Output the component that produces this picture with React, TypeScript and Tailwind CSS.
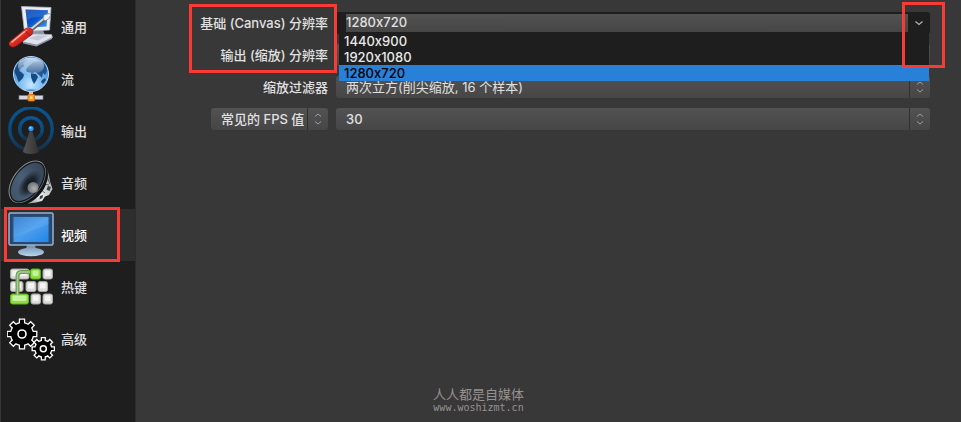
import React, { useState } from 'react';

const gearPath = (cx: number, cy: number, outer: number, inner: number) => {
  const at = (r: number, a: number) => `${(cx + r * Math.cos(a)).toFixed(2)} ${(cy + r * Math.sin(a)).toFixed(2)}`;
  let d = '';
  for (let i = 0; i < 8; i++) {
    const mid = (i * Math.PI) / 4;
    d += `${i === 0 ? 'M' : `A${inner} ${inner} 0 0 1 `}${at(inner, mid - 0.23)}`;
    d += `L${at(outer, mid - 0.17)}L${at(outer, mid + 0.17)}L${at(inner, mid + 0.23)}`;
  }
  return `${d}Z`;
};

const GeneralIcon = () => (
  <svg viewBox="0 0 48 48" className="size-12 shrink-0" aria-hidden="true">
    <defs>
      <linearGradient id="gen-screen" x1="0" y1="0" x2="1" y2="1">
        <stop offset="0" stopColor="#0d3f9c" />
        <stop offset="0.5" stopColor="#0a55c8" />
        <stop offset="1" stopColor="#3f9af0" />
      </linearGradient>
      <linearGradient id="gen-handle" x1="0" y1="0" x2="1" y2="1">
        <stop offset="0" stopColor="#ff9a86" />
        <stop offset="0.5" stopColor="#dc2a20" />
        <stop offset="1" stopColor="#8e0f0c" />
      </linearGradient>
    </defs>
    <path d="M24 28l12-1 2 5-13 2z" fill="#8f93a3" />
    <path d="M15 36l12-5 17.500.5 1 3-15.500 7.500-14-3z" fill="#dfe2ec" stroke="#aeb2c4" strokeWidth="0.6" />
    <path d="M16 39l13.500 3 15.500-7.500v1.500l-15.500 7.500-13.500-3z" fill="#9297ad" />
    <path d="M22 35.500l8-3h11l-10 5z" fill="#c3c8d8" />
    <path d="M14.500 3.500L44 4.500 42.500 27 17.500 28.500z" fill="#eceef4" stroke="#b2b6c8" strokeWidth="0.8" />
    <path d="M18.500 6.500L41 7.200 39.500 23.500 20.500 24.500z" fill="url(#gen-screen)" />
    <path d="M18.500 6.500L41 7.200 40.500 13C33 14 26 13 19.500 17z" fill="#5f9be8" opacity="0.3" />
    <path d="M24.500 26.500L38 15.500" stroke="#5b5e6a" strokeWidth="3.600" />
    <path d="M24 26L37.500 15" stroke="#d4d7de" strokeWidth="1.900" />
    <path d="M36 15.500l1-3.500 5-1.500 2 1.500-2.500 4-3.500 2z" fill="#eef0f4" stroke="#777a86" strokeWidth="0.7" />
    <path d="M3.500 38L18 26c2-1.800 5.500-1.500 7 .5s.8 4.500-1.500 6L9.500 43c-2.500 1.500-5 1.500-6.500 0s-1.500-3.500.5-5z" fill="url(#gen-handle)" stroke="#7d1511" strokeWidth="0.6" />
    <path d="M5 39L19 27.500" stroke="#ffb5a5" strokeWidth="1.500" strokeLinecap="round" />
    <path d="M17.500 27l6 6" stroke="#87110f" strokeWidth="0.8" />
  </svg>
);

const StreamIcon = () => (
  <svg viewBox="0 0 48 48" className="size-12 shrink-0" aria-hidden="true">
    <defs>
      <radialGradient id="globe" cx="0.5" cy="0.8" r="0.75">
        <stop offset="0" stopColor="#c4e8ff" />
        <stop offset="0.5" stopColor="#72b5ef" />
        <stop offset="1" stopColor="#2873c4" />
      </radialGradient>
      <linearGradient id="globe-shine" x1="0" y1="0" x2="0" y2="1">
        <stop offset="0" stopColor="#fff" stopOpacity="0.75" />
        <stop offset="1" stopColor="#fff" stopOpacity="0.1" />
      </linearGradient>
    </defs>
    <path d="M24 36v6" stroke="#c3c6d0" strokeWidth="4" />
    <rect x="12" y="40.500" width="24" height="4" fill="#d4d7dd" stroke="#777b86" strokeWidth="0.6" />
    <rect x="21" y="39.500" width="6.500" height="6.500" rx="0.8" fill="#ff9e19" stroke="#e06a08" strokeWidth="0.8" />
    <rect x="23" y="41.500" width="2.500" height="2.500" fill="#ffe58a" />
    <circle cx="24" cy="19" r="17.500" fill="url(#globe)" stroke="#b5dcfb" strokeWidth="1" />
    <g fill="#174a83">
      <path d="M9 12c2-4 6-7 10-8 2 0 2 1 0 2l-3 3c2 1 1 3-1 3l-3 4c2 1 4 2 5 4l-1 3-4 4c-1 0-2-5-3-7-2-2-2-5 0-8z" />
      <path d="M20 13c2-2 4-5 8-6l5-1c4 2 7 6 7 10l-2 4-2-2-1 5-4-4-3-2-2 1-6-1-1-2z" opacity="0.85" />
      <path d="M24 18l5 1 2 3-2 4-2 3-2-4-1-3zM35 25l3-2 1 2-3 4-2-2z" />
      <path d="M18 35c4-1 8-1 12 0-4 1.500-8 1.500-12 0z" opacity="0.5" />
    </g>
    <ellipse cx="24" cy="11" rx="13" ry="8.500" fill="url(#globe-shine)" />
  </svg>
);

const OutputIcon = () => (
  <svg viewBox="0 0 48 48" className="size-12 shrink-0" aria-hidden="true">
    <defs>
      <linearGradient id="wave" x1="0" y1="0" x2="0" y2="1">
        <stop offset="0" stopColor="#075593" />
        <stop offset="0.6" stopColor="#0b4877" />
        <stop offset="1" stopColor="#15304a" />
      </linearGradient>
      <linearGradient id="mast" x1="0" y1="0" x2="1" y2="0">
        <stop offset="0" stopColor="#555" />
        <stop offset="1" stopColor="#303030" />
      </linearGradient>
    </defs>
    <circle cx="24" cy="22" r="21.200" fill="none" stroke="url(#wave)" strokeWidth="3.400" />
    <circle cx="24" cy="22" r="11.300" fill="none" stroke="url(#wave)" strokeWidth="3.400" />
    <path d="M23 23h2l7 22c-3 2.500-13 2.500-16 0z" fill="url(#mast)" />
    <circle cx="24" cy="21.500" r="2.600" fill="#2495fb" />
    <circle cx="23.500" cy="20.800" r="1" fill="#9bd4ff" />
  </svg>
);

const AudioIcon = () => (
  <svg viewBox="0 0 48 48" className="size-12 shrink-0" aria-hidden="true">
    <defs>
      <linearGradient id="cone" x1="0" y1="0" x2="1" y2="0.3">
        <stop offset="0" stopColor="#3d5064" />
        <stop offset="0.5" stopColor="#4a6078" />
        <stop offset="1" stopColor="#39485a" />
      </linearGradient>
      <linearGradient id="chrome" x1="0" y1="1" x2="1" y2="0">
        <stop offset="0" stopColor="#8f9496" />
        <stop offset="0.35" stopColor="#eceeee" />
        <stop offset="0.7" stopColor="#b9bec0" />
        <stop offset="1" stopColor="#4b4f51" />
      </linearGradient>
      <radialGradient id="cone-core">
        <stop offset="0" stopColor="#0d1116" />
        <stop offset="0.5" stopColor="#151b22" stopOpacity="0.8" />
        <stop offset="1" stopColor="#1b232c" stopOpacity="0" />
      </radialGradient>
      <radialGradient id="hub" cx="0.6" cy="0.6" r="0.7">
        <stop offset="0" stopColor="#b0b0b0" />
        <stop offset="1" stopColor="#63676b" />
      </radialGradient>
    </defs>
    <path d="M38 8c3 3 4 8 5 14l2.500 8-3.500 6-4 1.500-3 4.500-6 1.500-8 1z" fill="url(#chrome)" />
    <path d="M41 27l3 1-1.500 4-3-1.500zM33 37l3-1-.5 3-3 1.500z" fill="#3a4042" />
    <path d="M39 15l4 10M33 30l5 4M37 25l5 1" stroke="#5c6264" strokeWidth="1" />
    <path d="M35 29l5-6M31 35l4-3" stroke="#fff" strokeWidth="1.200" />
    <g transform="rotate(-53 20.500 23)">
      <ellipse cx="20.500" cy="24.500" rx="24" ry="16" fill="#121415" />
      <ellipse cx="20.500" cy="22.800" rx="25" ry="15.300" fill="#151719" />
      <ellipse cx="20.500" cy="22.600" rx="24.300" ry="14.600" fill="#868c8c" />
      <ellipse cx="20.500" cy="22.900" rx="23.400" ry="13.800" fill="#15191c" />
      <ellipse cx="20.500" cy="22.800" rx="22" ry="12.500" fill="url(#cone)" />
      <ellipse cx="20" cy="26" rx="16" ry="9.200" fill="url(#cone-core)" />
    </g>
    <circle cx="26" cy="28.500" r="5.500" fill="url(#hub)" />
  </svg>
);

const VideoIcon = () => (
  <svg viewBox="0 0 48 48" className="size-12 shrink-0" aria-hidden="true">
    <defs>
      <linearGradient id="vid-screen" x1="0" y1="0" x2="1" y2="1">
        <stop offset="0" stopColor="#2f78c8" />
        <stop offset="0.5" stopColor="#4b9ded" />
        <stop offset="1" stopColor="#2385e5" />
      </linearGradient>
      <linearGradient id="vid-stand" x1="0" y1="0" x2="0" y2="1">
        <stop offset="0" stopColor="#7fa0bf" />
        <stop offset="1" stopColor="#b9d4ec" />
      </linearGradient>
    </defs>
    <path d="M20 34h8l1 4H19z" fill="#7895b1" />
    <ellipse cx="24" cy="41" rx="13" ry="4.300" fill="url(#vid-stand)" />
    <rect x="2" y="2" width="44" height="32" rx="1.500" fill="#2b4468" stroke="#94b4d5" strokeWidth="1.500" />
    <rect x="4.500" y="4.500" width="39" height="27" fill="#294f7c" />
    <rect x="6.500" y="6" width="35" height="25" fill="url(#vid-screen)" />
    <path d="M6.500 6h35v7L6.500 27z" fill="#8ec5f8" opacity="0.2" />
  </svg>
);

const hotkeys = [
  { x: 3.5, y: 6, w: 18.5, green: false },
  { x: 23.5, y: 6, w: 10, green: true },
  { x: 36, y: 6, w: 9.5, green: false },
  { x: 3.5, y: 18.5, w: 12.5, green: false },
  { x: 19, y: 18.5, w: 10, green: false },
  { x: 31, y: 18.5, w: 9.5, green: false },
  { x: 3.5, y: 31, w: 18, green: true },
  { x: 24, y: 31, w: 9.5, green: false },
  { x: 36, y: 31, w: 9.5, green: false },
];

const HotkeysIcon = () => (
  <svg viewBox="0 0 48 48" className="size-12 shrink-0" aria-hidden="true">
    {hotkeys.map(({ x, y, w, green }) => (
      <g key={`${x}-${y}`}>
        <rect x={x} y={y} width={w} height="10" rx="2" fill={green ? '#8fdc4a' : '#dcdcd8'} stroke={green ? '#55b50c' : '#a5a5a1'} />
        <rect x={x + 2} y={y + 1.5} width={w - 4} height="5.500" rx="1" fill={green ? '#c5f29a' : '#f4f4f2'} />
      </g>
    ))}
    <path d="M10.500 32V13q0-4 4-4H23" fill="none" stroke="#6e9c55" strokeWidth="4" />
    <path d="M10.500 32V13q0-4 4-4H23" fill="none" stroke="#a9cf92" strokeWidth="1.500" />
  </svg>
);

const AdvancedIcon = () => (
  <svg viewBox="0 0 48 48" className="size-12 shrink-0" aria-hidden="true">
    <g fill="#000" stroke="#fff" strokeWidth="1.300">
      <path d={gearPath(15, 19, 15, 11.5)} />
      <circle cx="15" cy="19" r="4" strokeWidth="1.600" />
      <path d={gearPath(36.3, 33.7, 11.3, 8.5)} />
      <circle cx="36.300" cy="33.700" r="3" strokeWidth="1.500" />
    </g>
  </svg>
);

const tabs = [
  { label: '通用', Icon: GeneralIcon },
  { label: '流', Icon: StreamIcon },
  { label: '输出', Icon: OutputIcon },
  { label: '音频', Icon: AudioIcon },
  { label: '视频', Icon: VideoIcon },
  { label: '热键', Icon: HotkeysIcon },
  { label: '高级', Icon: AdvancedIcon },
];

const resolutions = ['1440x900', '1920x1080', '1280x720'];

const Stepper = () => (
  <span className="pointer-events-none absolute inset-y-0 right-0 flex w-[21px] items-center justify-center border-l border-[#303030]">
    <svg viewBox="0 0 8 14" className="h-3.5 w-2" fill="none" stroke="#a0a0a0" aria-hidden="true">
      <path d="M1 4.500l3-2.500 3 2.500M1 9.500L4 12l3-2.500" />
    </svg>
  </span>
);

type SelectBoxProps = { id?: string; label?: string; options: string[]; className?: string };

const SelectBox: React.FC<SelectBoxProps> = ({ id, label, options, className = 'w-full' }) => (
  <div className={`relative ${className}`}>
    <select
      id={id}
      aria-label={label}
      className="block h-[22px] w-full appearance-none rounded-[3px] bg-linear-to-b from-[#525252] to-[#464646] pt-0.5 pr-6 pl-2.5 text-[#e0e0e0] outline-none"
    >
      {options.map((option) => (
        <option key={option}>{option}</option>
      ))}
    </select>
    <Stepper />
  </div>
);

const ResolutionBox: React.FC = () => {
  const [open, setOpen] = useState(true);
  const [value, setValue] = useState('1280x720');

  return (
    <div className="relative">
      <div className="flex h-[22px] rounded-[3px] bg-[#1e1e1e] pt-0.5 pb-0.5 pl-2.5">
        <input
          id="base-resolution"
          value={value}
          onChange={(e) => setValue(e.target.value)}
          className="min-w-0 flex-1 bg-linear-to-b from-[#525252] to-[#464646] font-medium text-[#e0e0e0] outline-none"
        />
        <button
          type="button"
          aria-label="展开分辨率列表"
          aria-expanded={open}
          onClick={() => setOpen(!open)}
          className="flex w-[22px] items-center justify-center"
        >
          <svg viewBox="0 0 10 6" className="h-1.5 w-2.5" fill="none" stroke="#b4b4b4" strokeWidth="1.200" aria-hidden="true">
            <path d="M1.500 1.500L5 4.500l3.500-3" />
          </svg>
        </button>
      </div>
      {open && (
        <ul role="listbox" aria-label="分辨率" className="absolute top-[21px] right-px left-[3px] z-10 bg-[#1e1e1e] font-medium">
          {resolutions.map((item) => (
            <li
              key={item}
              role="option"
              aria-selected={item === value}
              onClick={() => setValue(item)}
              className={`h-4 pl-[5px] leading-4 ${item === value ? 'bg-[#2980d9] text-black' : 'text-[#e8e8e8]'}`}
            >
              {item}
            </li>
          ))}
        </ul>
      )}
    </div>
  );
};

const App: React.FC = () => {
  return (
    <div className="relative flex min-h-screen w-full bg-[#383838] font-['Inter','Noto_Sans_CJK_SC',sans-serif] text-[13px] text-[#e0e0e0] [font-feature-settings:'calt'_0]">
      <nav className="w-34 shrink-0 border-r border-l border-r-[#2c2c2c] border-l-[#353535] bg-[#1e1e1e] pt-px">
        {tabs.map(({ label, Icon }) => {
          const active = label === '视频';
          return (
            <div key={label} className="relative">
              <button
                type="button"
                className={`flex h-13 w-full items-center gap-1.5 pl-1.5 font-medium ${active ? 'bg-[#2e2e2e] text-white' : ''}`}
              >
                <Icon />
                <span className="pt-0.5">{label}</span>
              </button>
              {active && <span className="pointer-events-none absolute -top-0.5 right-[15px] -bottom-px left-[3px] z-10 border-3 border-[#fb3a35]" />}
            </div>
          );
        })}
      </nav>

      <main className="relative min-w-0 flex-1 pt-3 pr-[31px]">
        <form className="grid grid-cols-[192px_minmax(0,1fr)] items-center gap-x-2 gap-y-2.5">
          <label htmlFor="base-resolution" className="pt-0.5 text-right font-medium">基础 (Canvas) 分辨率</label>
          <ResolutionBox />

          <label htmlFor="output-resolution" className="pt-0.5 text-right font-medium">输出 (缩放) 分辨率</label>
          <SelectBox id="output-resolution" options={['1280x720']} />

          <label htmlFor="scale-filter" className="pt-0.5 text-right font-medium">缩放过滤器</label>
          <SelectBox id="scale-filter" options={['两次立方(削尖缩放, 16 个样本)']} />

          <SelectBox label="FPS 类型" options={['常见的 FPS 值']} className="ml-auto w-[117px] font-medium" />
          <SelectBox label="FPS" options={['30']} className="w-full font-medium" />
        </form>

        <span className="pointer-events-none absolute top-1 left-[53px] z-20 h-[69px] w-[148px] border-3 border-[#fb3a35]" />
        <span className="pointer-events-none absolute top-0.5 right-4 z-20 h-[66px] w-[43px] border-3 border-[#fb3a35]" />
      </main>

      <p className="pointer-events-none absolute inset-x-0 bottom-2 pr-1 text-center text-[#979191]">
        <span className="block leading-4">人人都是自媒体</span>
        <span className="block font-['DejaVu_Sans_Mono',monospace] text-[10px] leading-3">www.woshizmt.cn</span>
      </p>
    </div>
  );
};

export default App;
